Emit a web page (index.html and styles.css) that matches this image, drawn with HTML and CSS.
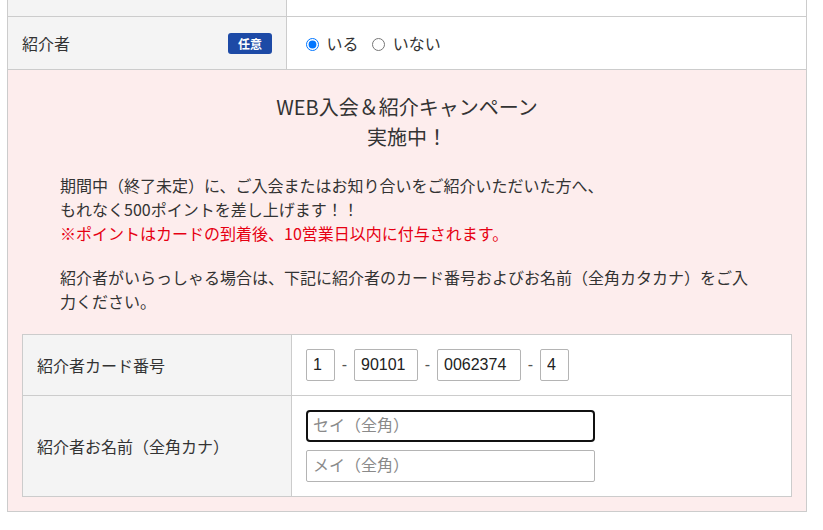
FILE: index.html
```html
<!DOCTYPE html>
<html lang="ja">
<head>
    <meta charset="UTF-8">
    <meta name="viewport" content="width=device-width, initial-scale=1.0">
    <title>会員登録</title>
    <link rel="stylesheet" href="styles.css">
</head>
<body>
    <table class="form-table">
        <colgroup>
            <col class="col-label">
            <col>
        </colgroup>
        <tr class="row-cut">
            <th></th>
            <td></td>
        </tr>
        <tr>
            <th>
                <div class="label-line">
                    <span>紹介者</span>
                    <span class="badge">任意</span>
                </div>
            </th>
            <td>
                <label class="radio"><input type="radio" name="intro" checked> いる</label>
                <label class="radio"><input type="radio" name="intro"> いない</label>
            </td>
        </tr>
        <tr>
            <td colspan="2" class="campaign">
                <h3 class="campaign-title">WEB入会＆紹介キャンペーン<br>実施中！</h3>
                <p class="campaign-text">
                    期間中（終了未定）に、ご入会またはお知り合いをご紹介いただいた方へ、<br>
                    もれなく500ポイントを差し上げます！！<br>
                    <span class="note">※ポイントはカードの到着後、10営業日以内に付与されます。</span>
                </p>
                <p class="campaign-text last">
                    紹介者がいらっしゃる場合は、下記に紹介者のカード番号およびお名前（全角カタカナ）をご入力ください。
                </p>

                <table class="sub-table">
                    <colgroup>
                        <col class="sub-label">
                        <col>
                    </colgroup>
                    <tr>
                        <th>紹介者カード番号</th>
                        <td>
                            <div class="card-no">
                                <input type="text" class="num w1" value="1">
                                <span class="dash">-</span>
                                <input type="text" class="num w5" value="90101">
                                <span class="dash">-</span>
                                <input type="text" class="num w7" value="0062374">
                                <span class="dash">-</span>
                                <input type="text" class="num w1" value="4">
                            </div>
                        </td>
                    </tr>
                    <tr>
                        <th>紹介者お名前（全角カナ）</th>
                        <td>
                            <input type="text" class="name-input focused" placeholder="セイ（全角）">
                            <input type="text" class="name-input" placeholder="メイ（全角）">
                        </td>
                    </tr>
                </table>
            </td>
        </tr>
    </table>
</body>
</html>
```

FILE: styles.css
```css
body {
    font-family: "Noto Sans CJK JP", "Noto Sans", sans-serif;
    color: #333;
    margin: 0;
    padding: 0 7px;
    background: #fff;
}
.form-table {
    width: 800px;
    border-collapse: collapse;
    table-layout: fixed;
    border-left: 1px solid #ccc;
    border-right: 1px solid #ccc;
}
.col-label {
    width: 279px;
}
.form-table th,
.form-table td {
    border-bottom: 1px solid #ccc;
    padding: 0 14px;
    font-size: 16px;
    font-weight: normal;
    text-align: left;
    line-height: 24px;
}
.form-table th {
    background: #f4f4f4;
    border-right: 1px solid #ccc;
}
.row-cut th,
.row-cut td {
    height: 16px;
    padding: 0;
}
.form-table tr:nth-child(2) th,
.form-table tr:nth-child(2) td {
    height: 52px;
}
.label-line {
    display: flex;
    justify-content: space-between;
    align-items: center;
}
.badge {
    background: #1d4aa6;
    color: #fff;
    font-size: 12px;
    font-weight: bold;
    line-height: 21px;
    width: 44px;
    text-align: center;
    border-radius: 3px;
}
.radio {
    margin-right: 5px;
}
.radio input {
    margin: 0 4px 0 5px;
    vertical-align: -1px;
}
.campaign {
    background: #fdeded;
    padding: 22px 14px 14px !important;
}
.campaign-title {
    font-size: 20px;
    font-weight: normal;
    line-height: 30px;
    text-align: center;
    margin: 0 0 21px;
}
.campaign-text {
    margin: 0 38px 20px;
    font-size: 16px;
    line-height: 24px;
}
.campaign-text.last {
    margin-bottom: 21px;
}
.note {
    color: #e60012;
}
.sub-table {
    width: 100%;
    border-collapse: collapse;
    table-layout: fixed;
    border: 1px solid #ccc;
}
.sub-label {
    width: 269px;
}
.sub-table th,
.sub-table td {
    border: 1px solid #ccc;
    padding: 14px;
    font-size: 16px;
    font-weight: normal;
    text-align: left;
}
.sub-table th {
    background: #f4f4f4;
}
.sub-table td {
    background: #fff;
}
.card-no {
    display: flex;
    align-items: center;
    gap: 6px;
}
.dash {
    font-family: "Liberation Sans", Arial, sans-serif;
    color: #555;
    width: 7px;
    text-align: center;
}
input[type="text"] {
    box-sizing: border-box;
    height: 32px;
    border: 1px solid #b4b4b4;
    border-radius: 2px;
    padding: 0 6px;
    font-size: 16px;
    font-family: "Liberation Sans", "Noto Sans CJK JP", sans-serif;
    color: #222;
    background: #fff;
    margin: 0;
}
.w1 { width: 29px; }
.w5 { width: 64px; }
.w7 { width: 84px; }
.name-input {
    display: block;
    width: 289px;
}
.name-input + .name-input {
    margin-top: 8px;
}
.name-input::placeholder {
    color: #8a8a8a;
    font-family: "Noto Sans CJK JP", sans-serif;
}
.name-input.focused {
    border: 2px solid #111;
    border-radius: 4px;
    padding: 0 5px;
}
```
